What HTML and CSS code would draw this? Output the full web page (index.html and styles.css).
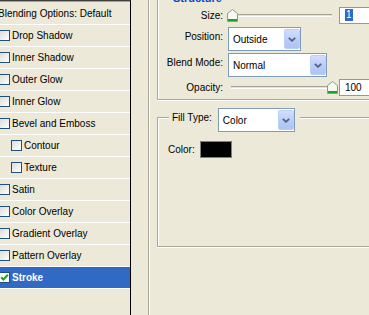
FILE: index.html
```html
<!DOCTYPE html>
<html lang="en">
<head>
    <meta charset="UTF-8">
    <meta name="viewport" content="width=device-width, initial-scale=1.0">
    <title>Layer Style - Stroke</title>
    <link rel="stylesheet" href="styles.css">
</head>
<body>
    <div class="dialog">
        <ul class="style-list">
            <li class="style-item heading"><span class="item-text">Blending Options: Default</span></li>
            <li class="style-item"><span class="check"></span><span class="item-text">Drop Shadow</span></li>
            <li class="style-item"><span class="check"></span><span class="item-text">Inner Shadow</span></li>
            <li class="style-item"><span class="check"></span><span class="item-text">Outer Glow</span></li>
            <li class="style-item"><span class="check"></span><span class="item-text">Inner Glow</span></li>
            <li class="style-item"><span class="check"></span><span class="item-text">Bevel and Emboss</span></li>
            <li class="style-item sub"><span class="check"></span><span class="item-text">Contour</span></li>
            <li class="style-item sub"><span class="check"></span><span class="item-text">Texture</span></li>
            <li class="style-item"><span class="check"></span><span class="item-text">Satin</span></li>
            <li class="style-item"><span class="check"></span><span class="item-text">Color Overlay</span></li>
            <li class="style-item"><span class="check"></span><span class="item-text">Gradient Overlay</span></li>
            <li class="style-item"><span class="check"></span><span class="item-text">Pattern Overlay</span></li>
            <li class="style-item selected">
                <span class="check">
                    <svg width="9" height="9" viewBox="0 0 9 9"><path d="M1.2 4.2 L3.4 6.5 L7.8 1.8" fill="none" stroke="#21a121" stroke-width="2"/></svg>
                </span><span class="item-text">Stroke</span>
            </li>
        </ul>

        <div class="options">
            <div class="group structure">
                <div class="group-title">Structure</div>
                <div class="form-grid">
                    <span class="label">Size:</span>
                    <div class="control">
                        <div class="slider">
                            <div class="track"></div>
                            <svg class="thumb thumb-min" width="11" height="13" viewBox="0 0 11 13">
                                <path d="M0.5 4.5 L5.5 0.5 L10.5 4.5 L10.5 12.5 L0.5 12.5 Z" fill="#f7f7f4" stroke="#8d9b8a"/>
                                <rect x="1" y="10" width="9" height="2" fill="#21a121"/>
                            </svg>
                        </div>
                        <div class="field"><span class="selected-text">1</span></div>
                    </div>

                    <span class="label raised">Position:</span>
                    <div class="control">
                        <div class="combo combo-position">
                            <span class="combo-text">Outside</span>
                            <span class="combo-btn">
                                <svg width="8" height="5" viewBox="0 0 8 5"><path d="M0.8 0.8 L4 3.8 L7.2 0.8" fill="none" stroke="#4d6185" stroke-width="1.8"/></svg>
                            </span>
                        </div>
                    </div>

                    <span class="label raised">Blend Mode:</span>
                    <div class="control">
                        <div class="combo combo-blend">
                            <span class="combo-text">Normal</span>
                            <span class="combo-btn">
                                <svg width="8" height="5" viewBox="0 0 8 5"><path d="M0.8 0.8 L4 3.8 L7.2 0.8" fill="none" stroke="#4d6185" stroke-width="1.8"/></svg>
                            </span>
                        </div>
                    </div>

                    <span class="label">Opacity:</span>
                    <div class="control">
                        <div class="slider">
                            <div class="track"></div>
                            <svg class="thumb thumb-max" width="11" height="13" viewBox="0 0 11 13">
                                <path d="M0.5 4.5 L5.5 0.5 L10.5 4.5 L10.5 12.5 L0.5 12.5 Z" fill="#f7f7f4" stroke="#8d9b8a"/>
                                <rect x="1" y="10" width="9" height="2" fill="#21a121"/>
                            </svg>
                        </div>
                        <div class="field">100</div>
                    </div>
                </div>
            </div>

            <div class="group fill">
                <div class="legend">
                    <span class="label raised">Fill Type:</span>
                    <div class="combo combo-fill">
                        <span class="combo-text">Color</span>
                        <span class="combo-btn">
                            <svg width="8" height="5" viewBox="0 0 8 5"><path d="M0.8 0.8 L4 3.8 L7.2 0.8" fill="none" stroke="#4d6185" stroke-width="1.8"/></svg>
                        </span>
                    </div>
                </div>
                <div class="color-row">
                    <span class="label">Color:</span>
                    <span class="swatch"></span>
                </div>
            </div>
        </div>
    </div>
</body>
</html>
```

FILE: styles.css
```css
* {
    margin: 0;
    padding: 0;
    box-sizing: border-box;
}

body {
    font-family: "Liberation Sans", Arial, sans-serif;
    font-size: 10px;
    color: #000;
    background: #ece9d8;
    width: 369px;
    height: 315px;
    overflow: hidden;
}

.dialog {
    display: flex;
    height: 315px;
}

/* left list of layer styles */
.style-list {
    list-style: none;
    width: 131px;
    flex-shrink: 0;
    height: 315px;
    border-top: 1px solid #404040;
    border-right: 1px solid #000;
    box-shadow: inset 0 1px #a0a0a0;
    padding-top: 2px;
    overflow: hidden;
}

.style-item {
    display: flex;
    align-items: center;
    height: 22px;
    border-bottom: 1px solid #fff;
    white-space: nowrap;
}

.style-item.heading .item-text {
    margin-left: -2px;
}

.style-item.sub {
    padding-left: 12px;
}

.style-item.selected {
    background: #316ac5;
    color: #fff;
    font-weight: bold;
}

.check {
    width: 11px;
    height: 11px;
    margin-left: -1px;
    margin-right: 2px;
    border: 1px solid #1c5180;
    background: linear-gradient(135deg, #dcdcd7, #fff);
    display: flex;
    align-items: center;
    justify-content: center;
    flex-shrink: 0;
}

.selected .check {
    background: #fff;
}

/* right side options */
.options {
    flex: 1;
    margin-left: 17px;
    border-left: 1px solid #aca899;
    box-shadow: inset 1px 0 #fff;
    overflow: hidden;
}

.group {
    width: 240px;
    margin-left: 8px;
    border-left: 1px solid #aca899;
    border-bottom: 1px solid #aca899;
    box-shadow: inset 1px 0 #fff, 0 1px #fff;
}

.group-title {
    height: 12px;
    line-height: 12px;
    margin-top: -8px;
    margin-left: 15px;
    font-size: 11px;
    font-weight: bold;
    color: #0046d5;
}

.form-grid {
    display: grid;
    grid-template-columns: 65px 1fr;
    grid-template-rows: 22px 26px 26px 18px;
    column-gap: 5px;
    padding-bottom: 3px;
}

.label {
    align-self: center;
    text-align: right;
    white-space: nowrap;
}

.label.raised {
    padding-bottom: 6px;
}

.control {
    display: flex;
    align-items: center;
}

.slider {
    position: relative;
    width: 110px;
    height: 13px;
}

.track {
    position: absolute;
    left: 3px;
    right: 6px;
    top: 5px;
    height: 3px;
    background: #e4e2d6;
    border-top: 1px solid #a5a294;
    border-bottom: 1px solid #fff;
}

.thumb {
    position: absolute;
    top: 0;
}

.thumb-min {
    left: -1px;
}

.thumb-max {
    left: 99px;
}

.field {
    width: 40px;
    height: 17px;
    margin-left: 1px;
    border: 1px solid #7f9db9;
    background: #fff;
    padding-left: 5px;
    display: flex;
    align-items: center;
}

.selected-text {
    background: #316ac5;
    color: #fff;
    line-height: 12px;
    padding: 0 1px;
}

.combo {
    height: 24px;
    border: 1px solid #7f9db9;
    background: #fff;
    padding: 1px 0 1px 1px;
    display: flex;
    align-items: center;
}

.combo-position {
    width: 73px;
}

.combo-blend {
    width: 99px;
}

.combo-fill {
    width: 77px;
    margin-left: 6px;
}

.combo-text {
    padding-left: 3px;
    padding-top: 1px;
}

.combo-btn {
    margin-left: auto;
    width: 16px;
    height: 20px;
    border: 1px solid #bccff7;
    border-radius: 2px;
    background: linear-gradient(to bottom, #d2defd, #b8cbf7 60%, #aec3f5);
    display: flex;
    align-items: center;
    justify-content: center;
}

.fill {
    height: 130px;
    margin-top: 17px;
    border-top: 1px solid #aca899;
    box-shadow: inset 1px 1px #fff, 0 1px #fff;
}

.legend {
    display: flex;
    align-items: center;
    width: fit-content;
    margin-top: -10px;
    margin-left: 11px;
    padding: 0 5px 0 3px;
    background: #ece9d8;
}

.color-row {
    display: flex;
    align-items: center;
    gap: 5px;
    margin-top: 9px;
    margin-left: 10px;
}

.swatch {
    width: 32px;
    height: 17px;
    background: #000;
    border: 1px solid #808080;
}
```
